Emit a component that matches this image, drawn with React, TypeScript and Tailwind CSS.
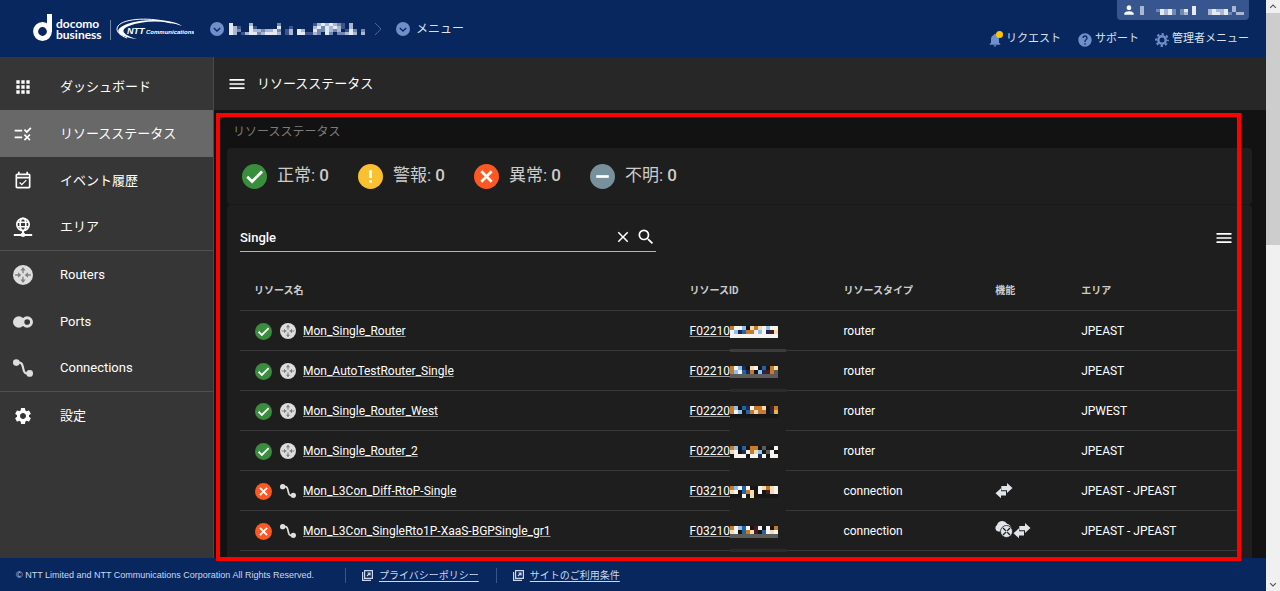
import React, { useState } from "react";
import {
  MdApps,
  MdClose,
  MdKeyboardArrowDown,
  MdKeyboardArrowUp,
  MdMenu,
  MdHelp,
  MdNotifications,
  MdOutlineEventAvailable,
  MdPerson,
  MdRule,
  MdSearch,
  MdSettings,
} from "react-icons/md";

type Status = "ok" | "warning" | "error" | "unknown";

interface Resource {
  name: string;
  id: string;
  type: "router" | "connection";
  status: Status;
  area: string;
  features: string[];
  mask: string[];
  line: string;
}

const resources: Resource[] = [
  { name: "Mon_Single_Router", id: "F02210", type: "router", status: "ok", area: "JPEAST", features: [], mask: ["owwbkyoywbww", "wbnBoowbwnmy", "wwwwwwwwwwww"], line: "#3c3c3c" },
  { name: "Mon_AutoTestRouter_Single", id: "F02210", type: "router", status: "ok", area: "JPEAST", features: [], mask: ["owbnkywkBkoy", "obwBnokbnmog", "gggggggggggg"], line: "#2b2b2b" },
  { name: "Mon_Single_Router_West", id: "F02220", type: "router", status: "ok", area: "JPWEST", features: [], mask: ["obkBnwooykmo", "owbkBoyooknr", "kkkkkkkkkkkk"], line: "#1e1e1e" },
  { name: "Mon_Single_Router_2", id: "F02220", type: "router", status: "ok", area: "JPEAST", features: [], mask: ["obkBkookgkkw", "ywknwoybkgwk", "kwwwkwwnwkww"], line: "#1e1e1e" },
  { name: "Mon_L3Con_Diff-RtoP-Single", id: "F03210", type: "connection", status: "error", area: "JPEAST - JPEAST", features: ["swap"], mask: ["obwBwkkwyoyw", "ywkBoykwkmyw", "kkkwkykkkkkk"], line: "#1e1e1e" },
  { name: "Mon_L3Con_SingleRto1P-XaaS-BGPSingle_gr1", id: "F03210", type: "connection", status: "error", area: "JPEAST - JPEAST", features: ["cloud", "swap"], mask: ["owbBwkmwkwko", "ywkBoymkBwyw", "gggggggggggg"], line: "#2b2b2b" },
];

const maskColors: Record<string, string> = {
  w: "#f7f4f0",
  b: "#8fc0ee",
  B: "#1f66a8",
  n: "#1b2a55",
  o: "#c9792c",
  r: "#f2b23c",
  y: "#f5dcae",
  m: "#4a1c22",
  k: "#161616",
  g: "#5c5c5c",
  "1": "#3b558a",
  "2": "#7088b3",
  "3": "#a9b7d2",
  "4": "#e4e9f2",
};

// Redacted value, drawn as coloured blocks
const Mosaic: React.FC<{ rows: string[]; rowHeight?: number }> = ({ rows, rowHeight = 4 }) => (
  <>
    {rows.map((row, y) =>
      row.split("").map((c, x) =>
        maskColors[c] ? (
          <rect key={`${x}-${y}`} x={x * 4} y={y * rowHeight} width={4} height={rowHeight} fill={maskColors[c]} shapeRendering="crispEdges" />
        ) : null
      )
    )}
  </>
);

const StatusIcon: React.FC<{ status: Status; className: string }> = ({ status, className }) => {
  const fill = { ok: "#388e3c", warning: "#fbc02d", error: "#ff5722", unknown: "#78909c" }[status];
  const path = {
    ok: "M5 12.3l4.7 4.5L19.3 7.2",
    warning: "M12 6v7.5M12 15.5v2.5",
    error: "M7 7l10 10M17 7L7 17",
    unknown: "M6 12h12",
  }[status];
  return (
    <svg viewBox="0 0 24 24" className={className}>
      <circle cx="12" cy="12" r="12" fill={fill} />
      <path d={path} fill="none" stroke="#fff" strokeWidth="2.6" />
    </svg>
  );
};

const RouterIcon: React.FC<{ className: string }> = ({ className }) => (
  <svg viewBox="0 0 24 24" className={className}>
    <circle cx="12" cy="12" r="12" fill="#dedede" />
    <path d="M12 10V5M12 14v5M2.5 12h5M21.5 12h-5" stroke="#808080" strokeWidth="1.6" />
    <path d="M12 2.5L8.8 6.5h6.4zM12 21.5l-3.2-4h6.4zM10 12L6 8.8v6.4zM14 12l4-3.2v6.4z" fill="#808080" />
  </svg>
);

const PortsIcon: React.FC<{ className: string }> = ({ className }) => (
  <svg viewBox="0 0 24 24" className={className}>
    <circle cx="7" cy="12" r="7" fill="#dedede" />
    <circle cx="17" cy="12" r="5.2" fill="#363636" stroke="#dedede" strokeWidth="3.6" />
  </svg>
);

const ConnectionIcon: React.FC<{ className: string }> = ({ className }) => (
  <svg viewBox="0 0 24 24" className={className}>
    <path d="M4 5.5h4c6 0 2.5 13 8 13h4" fill="none" stroke="#dedede" strokeWidth="2.6" />
    <circle cx="4" cy="5.5" r="4" fill="#dedede" />
    <circle cx="20" cy="18.5" r="4" fill="#dedede" />
  </svg>
);

const AreaIcon: React.FC<{ className: string }> = ({ className }) => (
  <svg viewBox="0 0 24 24" className={className}>
    <g fill="none" stroke="#fff" strokeWidth="2">
      <circle cx="12" cy="9" r="7.4" />
      <ellipse cx="12" cy="9" rx="3.4" ry="7.4" />
      <path d="M5 6.3h14M5 11.7h14" />
      <path d="M12 16v5M1 21.5h22" strokeWidth="2.4" />
    </g>
    <circle cx="12" cy="21.3" r="2.7" fill="#fff" />
  </svg>
);

const SwapIcon: React.FC = () => (
  <svg viewBox="0 0 18 16" className="h-4 w-[18px]" fill="#dfe5ea">
    <path d="M6.3 3H12V0l5.5 5L12 10V7.3H6.3z" />
    <path d="M11 8.3H6V5.3l-5.500 5 5.500 5v-2.700h5z" />
  </svg>
);

const CloudIcon: React.FC = () => (
  <svg viewBox="0 0 18 18" className="mb-1 h-[18px] w-[18px]" fill="#dfe5ea">
    <path d="M3 11.5A3.6 3.6 0 012 5a5.4 5.4 0 0110-1.2c2 .2 3.5 1.7 3.8 3.7L8 11.5z" />
    <circle cx="11.5" cy="11.5" r="6" stroke="#1e1e1e" strokeWidth=".8" />
    <path d="M8 8l7 7M15 8l-7 7" stroke="#1e1e1e" strokeWidth="1.3" />
    <circle cx="11.5" cy="11.5" r="1.1" />
  </svg>
);

const CogIcon: React.FC = () => (
  <svg viewBox="0 0 14 14" className="h-[14px] w-[14px]" fill="none" stroke="#6f8fca">
    <circle cx="7" cy="7" r="3.7" strokeWidth="2.4" />
    <circle cx="7" cy="7" r="5.9" strokeWidth="2" strokeDasharray="2.32 2.32" strokeDashoffset="1.16" />
  </svg>
);

const ChevronDisc: React.FC = () => (
  <svg viewBox="0 0 14 14" className="h-[14px] w-[14px]">
    <circle cx="7" cy="7" r="7" fill="#6f8fca" />
    <path d="M3.8 6L7 9l3.2-3" fill="none" stroke="#08275f" strokeWidth="1.3" />
  </svg>
);

const WindowIcon: React.FC = () => (
  <svg viewBox="0 0 11 11" className="h-[11px] w-[11px]" fill="none" stroke="#cdd8ec" strokeWidth="1.2">
    <path d="M2.6.6h7.8v7.8H2.6z" />
    <path d="M.6 2v8.4H9" />
    <path d="M5 6l3-3M5.5 3H8v2.5" />
  </svg>
);

const Logo: React.FC = () => (
  <svg viewBox="0 0 162 30" className="h-[30px] w-[162px]" fill="#fff" role="img" aria-label="docomo business NTT Communications">
    <circle cx="10.5" cy="17.5" r="6.9" fill="none" stroke="#fff" strokeWidth="5" />
    <path d="M15 0h5v18l-5-4z" />
    <text x="24" y="14" fontFamily="Lato" fontWeight="700" fontSize="12">docomo</text>
    <text x="24" y="25" fontFamily="Lato" fontWeight="700" fontSize="12">business</text>
    <path d="M78.5 6v20" stroke="#6f84ac" />
    <path d="M150 12C140 5 112 4 95 10c-13 5-13 12 10 15-14-4-18-9-8-13 14-6 37-6 53 0z" />
    <path d="M139 9C120 3 92 4 86 12c-3 5 1 9 9 12" fill="none" stroke="#fff" />
    <text x="95" y="20" fontFamily="Liberation Sans" fontWeight="700" fontStyle="italic" fontSize="9">NTT</text>
    <text x="114" y="20" fontFamily="Liberation Sans" fontWeight="700" fontStyle="italic" fontSize="6">Communications</text>
  </svg>
);

const navGroups = [
  [
    { label: "ダッシュボード", icon: <MdApps className="h-5 w-5" /> },
    { label: "リソースステータス", icon: <MdRule className="h-5 w-5" /> },
    { label: "イベント履歴", icon: <MdOutlineEventAvailable className="h-5 w-5" /> },
    { label: "エリア", icon: <AreaIcon className="h-5 w-5" /> },
  ],
  [
    { label: "Routers", icon: <RouterIcon className="h-5 w-5" /> },
    { label: "Ports", icon: <PortsIcon className="h-5 w-5" /> },
    { label: "Connections", icon: <ConnectionIcon className="h-5 w-5" /> },
  ],
  [{ label: "設定", icon: <MdSettings className="h-5 w-5" /> }],
];

const summary: { status: Status; label: string; count: number }[] = [
  { status: "ok", label: "正常", count: 0 },
  { status: "warning", label: "警報", count: 0 },
  { status: "error", label: "異常", count: 0 },
  { status: "unknown", label: "不明", count: 0 },
];

const Header: React.FC = () => (
  <header className="flex h-[57px] shrink-0 justify-between bg-[#08275f] pl-8 pr-[17px] text-[#dbe3f1]">
    <div className="flex items-center">
      <Logo />
      <button aria-label="テナント" className="ml-4 flex items-center gap-[5px]">
        <ChevronDisc />
        <svg viewBox="0 0 136 12" className="h-3 w-[136px]">
          <Mosaic rowHeight={3} rows={["4....3......2........13434321.3..", "431..41.....4..1.....34243431.3..", "432..43323342.13.43..4224323.142.2", "43.1344234443.13.441132.42.22343.3", ]} />
        </svg>
      </button>
      <svg viewBox="0 0 8 14" className="ml-[9px] h-[14px] w-2" fill="none" stroke="#4566a6">
        <path d="M1 1l6 6-6 6" />
      </svg>
      <button className="ml-[14px] flex items-center gap-[6px] text-[12px]">
        <ChevronDisc />
        メニュー
      </button>
    </div>
    <div className="flex flex-col items-end">
      <button aria-label="アカウント" className="flex h-5 w-[132px] items-center gap-1 rounded-b bg-[#37558e] pl-[5px]">
        <MdPerson className="h-[14px] w-[14px] text-white" />
        <svg viewBox="0 0 104 9" className="h-[9px] w-[104px]">
          <Mosaic rowHeight={3} rows={["3.......1..1.4.........3", "3.1.24342.24.4.1.34334.31", "3.1.14342.23.4..1344342.33"]} />
        </svg>
      </button>
      <div className="flex flex-1 items-center gap-4 pt-[2px] text-[11px]">
        <a href="#" className="flex items-center gap-[3px]">
          <span className="relative">
            <MdNotifications className="h-4 w-4 text-[#6f8fca]" />
            <span className="absolute -top-px right-0 h-[7px] w-[7px] rounded-full bg-[#ffc400]" />
          </span>
          リクエスト
        </a>
        <a href="#" className="flex items-center gap-[2px]">
          <MdHelp className="h-4 w-4 text-[#6f8fca]" />
          サポート
        </a>
        <a href="#" className="flex items-center gap-[3px]">
          <CogIcon />
          管理者メニュー
        </a>
      </div>
    </div>
  </header>
);

const Sidebar: React.FC = () => (
  <nav className="w-[214px] shrink-0 border-r border-[#4a4a4a] bg-[#363636] pt-[6px] text-[13px] text-white">
    {navGroups.map((group, i) => (
      <ul key={i}>
        {group.map((item, j) => (
          <li
            key={item.label}
            className={`h-[47px] border-[#505050] ${j === group.length - 1 && i < navGroups.length - 1 ? "border-b" : ""}`}
          >
            <a
              href="#"
              className={`flex h-full items-center gap-[27px] pl-[13px] ${
                item.label === "リソースステータス" ? "bg-[#686868]" : ""
              }`}
            >
              {item.icon}
              {item.label}
            </a>
          </li>
        ))}
      </ul>
    ))}
  </nav>
);

const ResourceTable: React.FC = () => (
  <table className="mt-[18px] w-full table-fixed text-left text-[12px] text-white">
    <thead>
      <tr className="h-10 border-b border-[#383838] text-[10px] text-[#cccccc]">
        <th className="w-[43.6%] pl-[14px] pt-[2px] font-bold">リソース名</th>
        <th className="w-[15.4%] pl-[14px] pt-[2px] font-bold">リソースID</th>
        <th className="w-[15.2%] pl-[14px] pt-[2px] font-bold">リソースタイプ</th>
        <th className="w-[8.6%] pl-[14px] pt-[2px] font-bold">機能</th>
        <th className="pl-[14px] pt-[2px] font-bold">エリア</th>
      </tr>
    </thead>
    <tbody>
      {resources.map((resource) => (
        <tr key={resource.name} className="h-10 border-b border-[#383838]">
          <td className="pl-[15px] pt-[2px]">
            <div className="flex items-center">
              <StatusIcon status={resource.status} className="h-[17px] w-[17px]" />
              <span className="ml-2 mr-[7px]">
                {resource.type === "router" ? <RouterIcon className="h-4 w-4" /> : <ConnectionIcon className="h-4 w-4" />}
              </span>
              <a href="#" className="underline decoration-[#9a9a9a]">{resource.name}</a>
            </div>
          </td>
          <td className="relative pl-[14px] pt-[2px]">
            <a href="#" className="underline decoration-[#9a9a9a]">{resource.id}</a>
            <svg viewBox="0 0 56 27" className="absolute left-[54px] top-[15px] h-[27px] w-[56px]">
              <Mosaic rows={resource.mask} />
              <rect y="23" width="56" height="3" fill={resource.line} />
            </svg>
          </td>
          <td className="pl-[14px] pt-[2px]">{resource.type}</td>
          <td className="pl-[14px] pt-[2px]">
            <div className="flex items-center">
              {resource.features.map((feature) => (feature === "cloud" ? <CloudIcon key={feature} /> : <SwapIcon key={feature} />))}
            </div>
          </td>
          <td className="pl-[14px] pt-[2px]">{resource.area}</td>
        </tr>
      ))}
    </tbody>
  </table>
);

const App: React.FC = () => {
  const [keyword, setKeyword] = useState("Single");

  return (
    <div className="flex h-screen overflow-hidden bg-[#121212] font-[Roboto,'Noto_Sans_CJK_JP',sans-serif]">
      <div className="flex min-w-0 flex-1 flex-col">
        <Header />
        <div className="flex min-h-0 flex-1">
          <Sidebar />
          <div className="relative flex min-w-0 flex-1 flex-col">
            <div className="flex h-[53px] shrink-0 items-center gap-[10px] bg-[#272727] pl-[13px] text-white">
              <button aria-label="サイドメニュー">
                <MdMenu className="h-5 w-5" />
              </button>
              <h1 className="text-[13px]">リソースステータス</h1>
            </div>
            <main className="min-h-0 flex-1 overflow-hidden pl-[13px] pr-[14px]">
              <p className="flex h-[38px] items-center pl-[6px] pt-[6px] text-[12px] text-[#7c7c7c]">リソースステータス</p>
              <section className="flex h-[57px] items-center rounded border-b border-[#191919] bg-[#1e1e1e] pl-[15px] text-[17px] text-[#cccccc]">
                {summary.map((item) => (
                  <div key={item.status} className="flex w-[116px] items-center gap-[10px]">
                    <StatusIcon status={item.status} className="h-[25px] w-[25px]" />
                    <span>
                      {item.label}: <span className="font-medium">{item.count}</span>
                    </span>
                  </div>
                ))}
              </section>
              <section className="rounded-t bg-[#1e1e1e] px-[13px] pb-8 pt-[18px]">
                <div className="flex items-center justify-between">
                  <div className="flex h-[29px] w-5/12 items-center gap-1 border-b border-[#b5b5b5] text-white">
                    <input
                      aria-label="検索"
                      value={keyword}
                      onChange={(e) => setKeyword(e.target.value)}
                      className="min-w-0 flex-1 pt-px text-[13px] font-medium outline-none"
                    />
                    <button aria-label="クリア" onClick={() => setKeyword("")}>
                      <MdClose className="h-[18px] w-[18px]" />
                    </button>
                    <button aria-label="検索する">
                      <MdSearch className="h-5 w-5" />
                    </button>
                  </div>
                  <button aria-label="表示項目" className="mr-[5px] text-white">
                    <MdMenu className="h-5 w-5" />
                  </button>
                </div>
                <ResourceTable />
              </section>
            </main>
            {/* Highlight frame around the resource list */}
            <div className="pointer-events-none absolute -bottom-[3px] left-[2px] right-[25px] top-14 z-10 border-4 border-[#ff0000]" />
          </div>
        </div>
        <footer className="flex h-[33px] shrink-0 items-center bg-[#08275f] pl-4 pt-[2px] text-[10px] text-[#cdd8ec]">
          <small className="w-[312px] font-['Liberation_Sans',sans-serif] text-[9px]">
            © NTT Limited and NTT Communications Corporation All Rights Reserved.
          </small>
          <a href="#" className="ml-[17px] flex items-center gap-[6px] border-l border-[#38558c] pl-4">
            <WindowIcon />
            <span className="underline underline-offset-2">プライバシーポリシー</span>
          </a>
          <a href="#" className="ml-[17px] flex items-center gap-[6px] border-l border-[#38558c] pl-4">
            <WindowIcon />
            <span className="underline underline-offset-2">サイトのご利用条件</span>
          </a>
        </footer>
      </div>
      {/* Page scroll bar */}
      <div className="flex w-[14px] shrink-0 flex-col items-center bg-[#f0f0f0] text-[#505050]">
        <button aria-label="上へ" className="h-[13px]">
          <MdKeyboardArrowUp className="h-[13px] w-[14px]" />
        </button>
        <div className="min-h-0 w-full flex-1">
          <div className="h-[41%] bg-[#cdcdcd]" />
        </div>
        <button aria-label="下へ" className="h-[13px]">
          <MdKeyboardArrowDown className="h-[13px] w-[14px]" />
        </button>
      </div>
    </div>
  );
};

export default App;
